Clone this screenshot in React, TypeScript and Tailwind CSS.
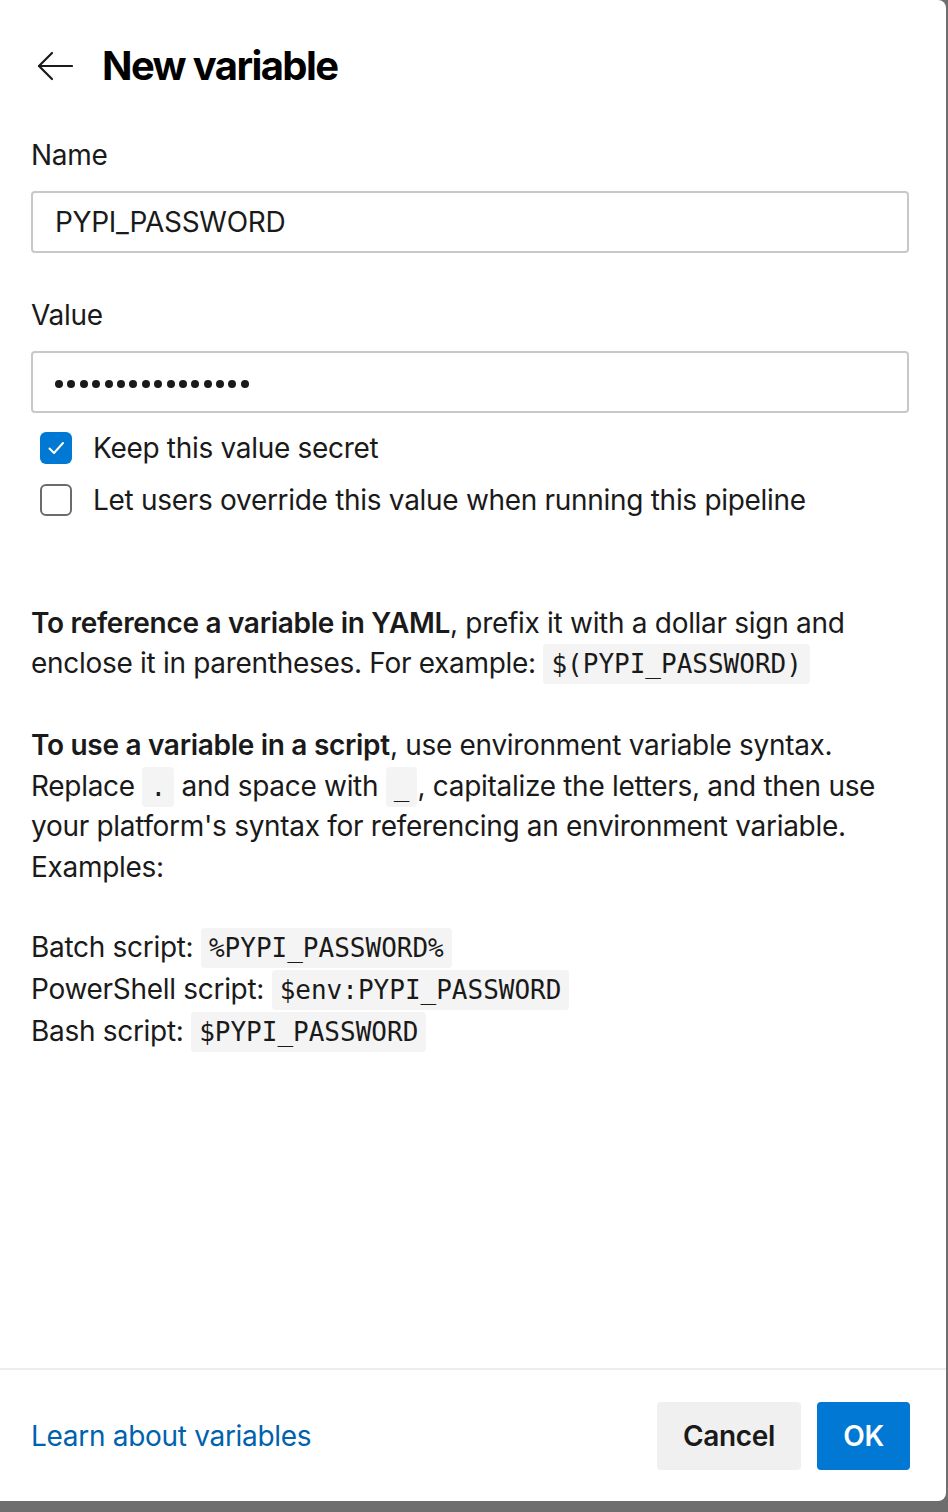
import React from 'react'

// "New variable" side panel: name/value fields, two options, usage help
// and a footer with the learn link plus Cancel / OK.

const SANS = { fontFamily: 'Inter, "Noto Sans", sans-serif' }

function Code({ children }: { children: React.ReactNode }) {
  return (
    <code className="rounded-[4px] bg-[#f4f4f4] px-[8px] py-[5px] text-[26px] leading-none tracking-normal text-[#1a1a1a] [font-family:'DejaVu_Sans_Mono',monospace]">
      {children}
    </code>
  )
}

function BackArrow() {
  return (
    <svg width="36" height="30" viewBox="0 0 36 30" fill="none" stroke="#1a1a1a" strokeWidth="2.2" strokeLinecap="round" strokeLinejoin="round">
      <path d="M2 15h33" />
      <path d="M15 2 2 15l13 13" />
    </svg>
  )
}

function Check({ checked, label }: { checked: boolean; label: string }) {
  return (
    <label className="flex h-[40px] items-center gap-[21px] pl-[9px]">
      {checked ? (
        <span className="flex h-[32px] w-[32px] items-center justify-center rounded-[6px] bg-[#0078d4]">
          <svg width="20" height="20" viewBox="0 0 20 20" fill="none" stroke="#fff" strokeWidth="2" strokeLinecap="round" strokeLinejoin="round">
            <path d="M3.5 10.5 8 15l9-10" />
          </svg>
        </span>
      ) : (
        <span className="h-[32px] w-[32px] rounded-[6px] border-2 border-[#6b6b6b] bg-white" />
      )}
      <span>{label}</span>
    </label>
  )
}

export default function App() {
  return (
    <div className="h-[1512px] w-[948px] bg-[#6e6e6e]" style={SANS}>
      <div className="flex h-[1501px] w-[946px] flex-col rounded-r-[8px] bg-white text-[28px] leading-[40px] tracking-[-0.3px] text-[#1a1a1a]">
        <div className="flex-1 pl-[31px] pr-[37px]">
          <div className="mt-[42px] flex h-[48px] items-center gap-[29px]">
            <span className="pl-[6px]">
              <BackArrow />
            </span>
            <h1 className="text-[40px] font-bold tracking-[-1.6px] text-black">New variable</h1>
          </div>

          <div className="mt-[45px]">Name</div>
          <input
            readOnly
            value="PYPI_PASSWORD"
            className="mt-[16px] h-[62px] w-full rounded-[4px] border-2 border-[#c8c8c8] px-[22px] text-[28px] tracking-[-0.3px] text-[#1a1a1a] outline-none"
          />

          <div className="mt-[42px]">Value</div>
          <div className="mt-[16px] flex h-[62px] w-full items-center rounded-[4px] border-2 border-[#c8c8c8] px-[22px]">
            <span className="flex gap-[4.4px] pt-[3px]">
              {Array.from({ length: 16 }).map((_, i) => (
                <span key={i} className="h-[8px] w-[8px] rounded-full bg-[#1a1a1a]" />
              ))}
            </span>
          </div>

          <div className="mt-[15px] flex flex-col gap-[12px]">
            <Check checked label="Keep this value secret" />
            <Check checked={false} label="Let users override this value when running this pipeline" />
          </div>

          <p className="mt-[83px] leading-[40px]">
            <strong className="font-semibold">To reference a variable in YAML</strong>, prefix it with a dollar sign and
            enclose it in parentheses. For example: <Code>$(PYPI_PASSWORD)</Code>
          </p>

          <p className="mt-[42px] leading-[40.6px]">
            <strong className="font-semibold">To use a variable in a script</strong>, use environment variable syntax.
            Replace <Code>.</Code> and space with <Code>_</Code>, capitalize the letters, and then use your platform's
            syntax for referencing an environment variable. Examples:
          </p>

          <div className="mt-[39px] flex flex-col leading-[42px]">
            <div>
              Batch script: <Code>%PYPI_PASSWORD%</Code>
            </div>
            <div>
              PowerShell script: <Code>$env:PYPI_PASSWORD</Code>
            </div>
            <div>
              Bash script: <Code>$PYPI_PASSWORD</Code>
            </div>
          </div>
        </div>

        <div className="flex h-[133px] items-center justify-between border-t-2 border-[#ededed] pl-[31px] pr-[36px]">
          <a className="text-[#0062ad]">Learn about variables</a>
          <div className="flex gap-[16px]">
            <button className="h-[68px] w-[144px] rounded-[4px] bg-[#f0f0f0] font-semibold text-[#1a1a1a]">Cancel</button>
            <button className="h-[68px] w-[93px] rounded-[4px] bg-[#0078d4] font-semibold text-white">OK</button>
          </div>
        </div>
      </div>
    </div>
  )
}
